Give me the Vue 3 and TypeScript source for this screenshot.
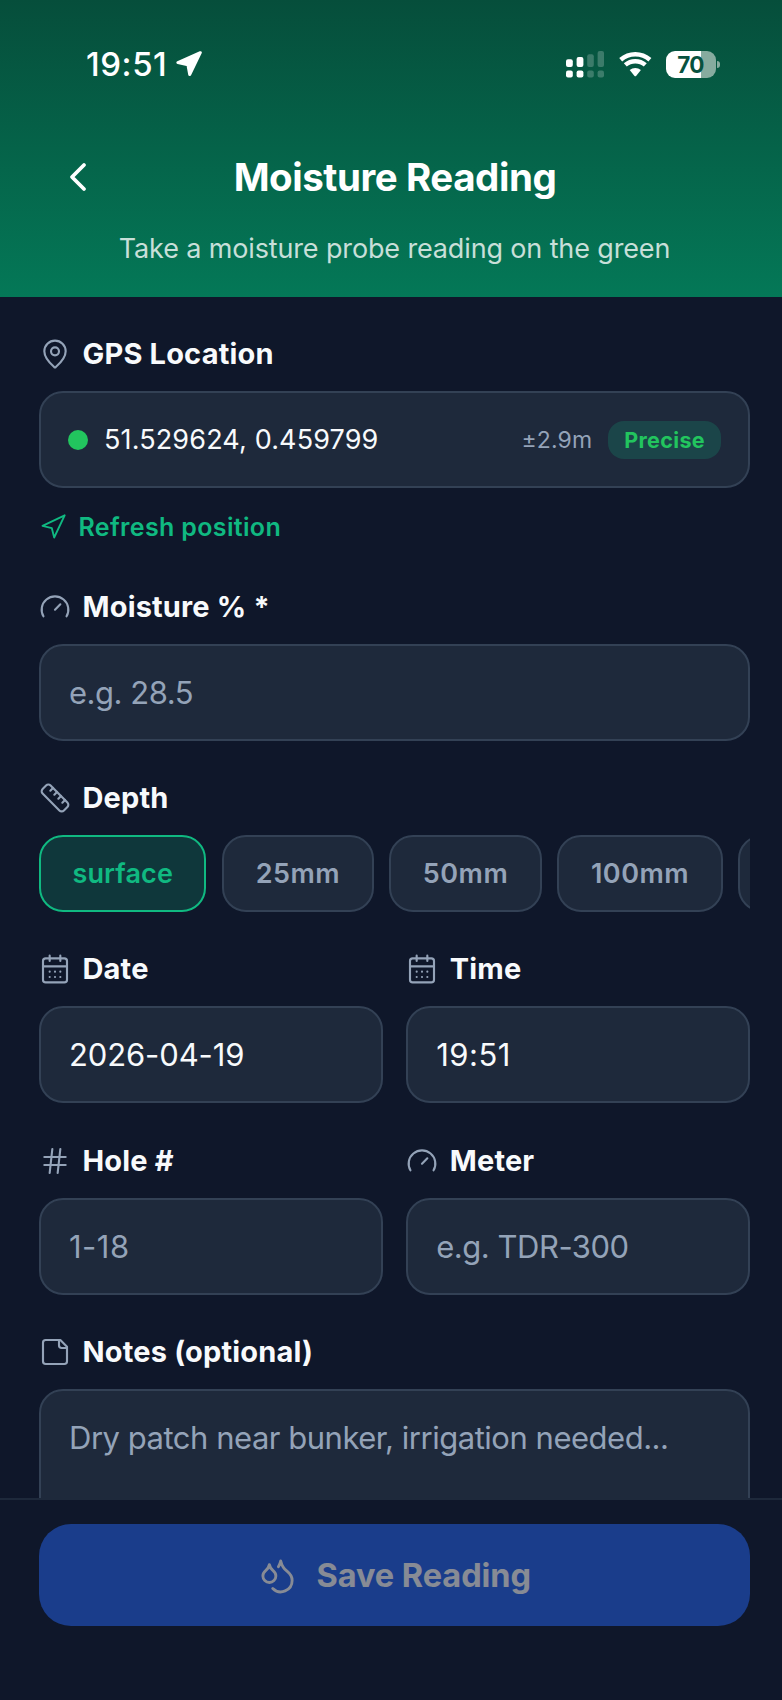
<script setup lang="ts">
import { ref } from 'vue'

type IconName = 'pin' | 'navigation' | 'gauge' | 'ruler' | 'calendar' | 'hash' | 'note' | 'droplets' | 'back'

const icons: Record<IconName, string[]> = {
  pin: [
    'M20 10c0 4.993-5.539 10.193-7.399 11.799a1 1 0 0 1-1.202 0C9.539 20.193 4 14.993 4 10a8 8 0 0 1 16 0Z',
    'M15 10a3 3 0 1 1-6 0a3 3 0 1 1 6 0Z',
  ],
  navigation: ['M3 11 22 2 13 21 11 13Z'],
  gauge: ['m12 14 4-4', 'M3.34 19a10 10 0 1 1 17.32 0'],
  ruler: [
    'M21.3 15.3a2.4 2.4 0 0 1 0 3.4l-2.6 2.6a2.4 2.4 0 0 1-3.4 0L2.7 8.7a2.41 2.41 0 0 1 0-3.4l2.6-2.6a2.41 2.41 0 0 1 3.4 0Z',
    'm14.5 12.5 2-2',
    'm11.5 9.5 2-2',
    'm8.5 6.5 2-2',
    'm17.5 15.5 2-2',
  ],
  calendar: [
    'M8 2v4',
    'M16 2v4',
    'M5 4h14a2 2 0 0 1 2 2v14a2 2 0 0 1-2 2H5a2 2 0 0 1-2-2V6a2 2 0 0 1 2-2Z',
    'M3 10h18',
    'M8 14h.01',
    'M12 14h.01',
    'M16 14h.01',
    'M8 18h.01',
    'M12 18h.01',
    'M16 18h.01',
  ],
  hash: ['M4 9h16', 'M4 15h16', 'M10 3 8 21', 'M16 3l-2 18'],
  note: ['M16 3H5a2 2 0 0 0-2 2v14a2 2 0 0 0 2 2h14a2 2 0 0 0 2-2V8Z', 'M15 3v4a2 2 0 0 0 2 2h4'],
  droplets: [
    'M7 16.3c2.2 0 4-1.83 4-4.05 0-1.16-.57-2.26-1.71-3.19S7.29 6.75 7 5.3c-.29 1.45-1.14 2.84-2.29 3.76S3 11.1 3 12.25c0 2.22 1.8 4.05 4 4.05z',
    'M12.56 6.6A10.97 10.97 0 0 0 14 3.02c.5 2.5 2 4.9 4 6.5s3 3.5 3 5.5a6.98 6.98 0 0 1-11.91 4.97',
  ],
  back: ['m15 18-6-6 6-6'],
}

const depths = ['surface', '25mm', '50mm', '100mm']
const depth = ref('surface')
const moisture = ref('')
const date = ref('2026-04-19')
const time = ref('19:51')
const hole = ref('')
const meter = ref('')
const notes = ref('')
</script>

<template>
  <div class="screen">
    <header class="top">
      <div class="status">
        <span class="clock">19:51</span>
        <svg class="arrow" viewBox="0 0 26 26">
          <path d="M24.3 1.7 1.9 11.6 11.9 13.8 13.7 23.6Z" />
        </svg>
        <svg class="signal" viewBox="0 0 38 27">
          <rect x="0" y="8.3" width="6.8" height="7.6" rx="2" />
          <rect x="10.6" y="6" width="6.8" height="9.9" rx="2" />
          <rect class="dim" x="21.2" y="3.2" width="6.6" height="12.7" rx="2" />
          <rect class="dim" x="31.6" y="0" width="6.4" height="15.9" rx="2" />
          <rect x="0" y="19.4" width="6.8" height="7.2" rx="2" />
          <rect x="10.6" y="19.4" width="6.8" height="7.2" rx="2" />
          <rect class="dim" x="21.2" y="19.4" width="6.6" height="7.2" rx="2" />
          <rect class="dim" x="31.6" y="19.4" width="6.4" height="7.2" rx="2" />
        </svg>
        <svg class="wifi" viewBox="0 0 33 25">
          <path class="ring" d="M1.7 7.7A22.2 22.2 0 0 1 30.9 7.7" />
          <path class="ring" d="M6.3 12.9A15.2 15.2 0 0 1 26.3 12.9" />
          <path d="M10.7 17.9A8.8 8.8 0 0 1 21.9 17.9L17.3 23.8Q16.3 24.8 15.3 23.8Z" />
        </svg>
        <div class="battery"><span>70</span></div>
        <i class="nub"></i>
      </div>
      <div class="titlebar">
        <button class="back" aria-label="Back">
          <svg class="icon" viewBox="0 0 24 24"><path v-for="d in icons.back" :key="d" :d="d" /></svg>
        </button>
        <h1>Moisture Reading</h1>
      </div>
      <p class="subtitle">Take a moisture probe reading on the green</p>
    </header>

    <main class="form">
      <section class="field">
        <h2 class="label">
          <svg class="icon" viewBox="0 0 24 24"><path v-for="d in icons.pin" :key="d" :d="d" /></svg>
          GPS Location
        </h2>
        <div class="box gps">
          <i class="dot"></i>
          <span class="coords">51.529624, 0.459799</span>
          <span class="accuracy">±2.9m</span>
          <span class="badge">Precise</span>
        </div>
        <button class="refresh">
          <svg class="icon" viewBox="0 0 24 24"><path v-for="d in icons.navigation" :key="d" :d="d" /></svg>
          Refresh position
        </button>
      </section>

      <section class="field">
        <h2 class="label">
          <svg class="icon" viewBox="0 0 24 24"><path v-for="d in icons.gauge" :key="d" :d="d" /></svg>
          Moisture % *
        </h2>
        <input v-model="moisture" class="box" placeholder="e.g. 28.5" />
      </section>

      <section class="field">
        <h2 class="label">
          <svg class="icon" viewBox="0 0 24 24"><path v-for="d in icons.ruler" :key="d" :d="d" /></svg>
          Depth
        </h2>
        <div class="chips">
          <button
            v-for="d in depths"
            :key="d"
            class="chip"
            :class="{ active: d === depth }"
            @click="depth = d"
          >{{ d }}</button>
          <span class="chip rest" aria-hidden="true"></span>
        </div>
      </section>

      <div class="pair">
        <section class="field">
          <h2 class="label">
            <svg class="icon" viewBox="0 0 24 24"><path v-for="d in icons.calendar" :key="d" :d="d" /></svg>
            Date
          </h2>
          <input v-model="date" class="box date" />
        </section>
        <section class="field">
          <h2 class="label">
            <svg class="icon" viewBox="0 0 24 24"><path v-for="d in icons.calendar" :key="d" :d="d" /></svg>
            Time
          </h2>
          <input v-model="time" class="box digits" />
        </section>
      </div>

      <div class="pair">
        <section class="field">
          <h2 class="label">
            <svg class="icon" viewBox="0 0 24 24"><path v-for="d in icons.hash" :key="d" :d="d" /></svg>
            Hole #
          </h2>
          <input v-model="hole" class="box digits" placeholder="1-18" />
        </section>
        <section class="field">
          <h2 class="label">
            <svg class="icon" viewBox="0 0 24 24"><path v-for="d in icons.gauge" :key="d" :d="d" /></svg>
            Meter
          </h2>
          <input v-model="meter" class="box" placeholder="e.g. TDR-300" />
        </section>
      </div>

      <section class="field">
        <h2 class="label">
          <svg class="icon" viewBox="0 0 24 24"><path v-for="d in icons.note" :key="d" :d="d" /></svg>
          Notes (optional)
        </h2>
        <textarea v-model="notes" class="box notes" placeholder="Dry patch near bunker, irrigation needed..."></textarea>
      </section>
    </main>

    <footer class="bottom">
      <button class="save">
        <svg class="icon" viewBox="0 0 24 24"><path v-for="d in icons.droplets" :key="d" :d="d" /></svg>
        Save Reading
      </button>
    </footer>
  </div>
</template>

<style>
html,
body {
  background: #0f172a;
}
</style>

<style scoped>
.screen {
  width: 782px;
  height: 1700px;
  display: flex;
  flex-direction: column;
  overflow: hidden;
  background: #0f172a;
  color: #f8fafc;
  font-family: Inter, "Liberation Sans", sans-serif;
}
.screen *,
.screen *::before {
  box-sizing: border-box;
}
button,
input,
textarea {
  font-family: inherit;
  color: inherit;
  margin: 0;
  outline: none;
  appearance: none;
}
h1,
h2,
p {
  margin: 0;
}
.icon {
  display: block;
  flex: none;
  fill: none;
  stroke: currentColor;
  stroke-width: 1.6;
  stroke-linecap: round;
  stroke-linejoin: round;
}

/* header */
.top {
  flex: none;
  height: 297px;
  background: linear-gradient(180deg, #064e3b, #047857);
}
.status {
  height: 128px;
  padding: 0 62.5px 0 86px;
  display: flex;
  align-items: center;
  color: #fff;
}
.clock {
  width: 90px;
  font-size: 33px;
  font-weight: 550;
  letter-spacing: 0.55px;
}
.arrow {
  width: 26px;
  height: 26px;
  margin-right: auto;
  fill: #fff;
  stroke: #fff;
  stroke-width: 3;
  stroke-linejoin: round;
}
.signal {
  width: 38px;
  height: 27px;
  margin-right: 15px;
  fill: #fff;
}
.signal .dim {
  fill: rgba(255, 255, 255, 0.22);
}
.wifi {
  width: 33px;
  height: 25px;
  margin-right: 14px;
  fill: #fff;
  overflow: visible;
}
.wifi .ring {
  fill: none;
  stroke: #fff;
  stroke-width: 4.5;
}
.battery {
  width: 50px;
  height: 27px;
  padding-right: 1px;
  border-radius: 9px;
  background: linear-gradient(90deg, #fff 35px, #86ab9f 35px);
  color: #07523f;
  font-size: 22.5px;
  font-weight: 700;
  letter-spacing: -0.8px;
  line-height: 27px;
  text-align: center;
}
.nub {
  width: 2.5px;
  height: 7px;
  margin-left: 1px;
  border-radius: 0 3px 3px 0;
  background: #86ab9f;
}
.titlebar {
  height: 98px;
  padding: 0 31px 0 54px;
  display: grid;
  grid-template-columns: 48px 1fr 63px;
  align-items: center;
}
.back {
  padding: 0;
  border: 0;
  background: none;
  color: #fff;
}
.back .icon {
  width: 48px;
  height: 48px;
  stroke-width: 1.9;
}
h1 {
  font-size: 38.5px;
  font-weight: 700;
  letter-spacing: -0.45px;
  line-height: 48px;
  text-align: center;
  color: #fff;
}
.subtitle {
  margin-top: 3px;
  padding: 0 32px 0 39px;
  font-size: 27px;
  line-height: 40px;
  letter-spacing: -0.14px;
  text-align: center;
  color: rgba(255, 255, 255, 0.78);
}

/* form */
.form {
  flex: 1;
  min-height: 0;
  overflow: hidden;
  padding: 39px 32px 0 39px;
  display: flex;
  flex-direction: column;
  gap: 39.2px;
}
.field {
  flex: none;
  display: flex;
  flex-direction: column;
}
.label {
  height: 36px;
  margin-bottom: 19px;
  display: flex;
  align-items: center;
  gap: 11.5px;
  font-size: 29px;
  font-weight: 700;
  letter-spacing: 0.17px;
  line-height: 36px;
  white-space: nowrap;
}
.label .icon {
  width: 32px;
  height: 32px;
  color: #94a3b8;
}
.box {
  width: 100%;
  height: 97px;
  padding: 0 28px;
  border: 2px solid #334155;
  border-radius: 24px;
  background: #1e293b;
  font-size: 31px;
  letter-spacing: -0.48px;
}
.box::placeholder {
  color: #94a3b8;
  opacity: 1;
}
.box.date {
  letter-spacing: -0.12px;
}
.box.digits {
  letter-spacing: 0.5px;
}
.notes {
  display: block;
  height: 190px;
  padding-top: 28px;
  line-height: 38px;
  resize: none;
}
.gps {
  padding-left: 27px;
  display: flex;
  align-items: center;
}
.dot {
  width: 20px;
  height: 20px;
  margin-right: 16px;
  border-radius: 50%;
  background: #22c55e;
}
.coords {
  margin-right: auto;
  font-size: 27px;
  letter-spacing: 0.14px;
}
.accuracy {
  margin-right: 16px;
  font-size: 23px;
  letter-spacing: 0.13px;
  color: #94a3b8;
}
.badge {
  height: 38px;
  padding: 0 16px;
  border-radius: 16px;
  background: rgba(16, 185, 129, 0.2);
  font-size: 21.5px;
  font-weight: 700;
  letter-spacing: 0.35px;
  line-height: 38px;
  color: #22c55e;
}
.gps .badge {
  margin-right: -1px;
}
.refresh {
  height: 44.8px;
  margin-top: 17px;
  padding: 0;
  display: flex;
  align-items: center;
  gap: 11.5px;
  border: 0;
  background: none;
  font-size: 25px;
  font-weight: 600;
  letter-spacing: 0.35px;
  color: #10b981;
}
.refresh .icon {
  width: 28px;
  height: 28px;
}
.chips {
  display: flex;
  gap: 15.7px;
  overflow: hidden;
}
.chip {
  flex: none;
  height: 77px;
  padding: 0 31.5px;
  border: 2px solid #334155;
  border-radius: 24px;
  background: #1e293b;
  font-size: 27px;
  font-weight: 600;
  letter-spacing: 0.5px;
  color: #94a3b8;
}
.chip.active {
  border-color: #10b981;
  background: rgba(16, 185, 129, 0.2);
  letter-spacing: 0.1px;
  color: #10b981;
}
.chip.rest {
  width: 150px;
}
.pair {
  flex: none;
  display: grid;
  grid-template-columns: 1fr 1fr;
  gap: 23.5px;
}

/* footer */
.bottom {
  flex: none;
  height: 202px;
  padding: 23.5px 32px 0 39px;
  border-top: 2px solid #1e293b;
  background: #0f172a;
}
.save {
  width: 100%;
  height: 102.5px;
  padding: 1px 0 0;
  display: flex;
  align-items: center;
  justify-content: center;
  gap: 19.5px;
  border: 0;
  border-radius: 32px;
  background: #2563eb;
  color: #fff;
  font-size: 32.5px;
  font-weight: 700;
  letter-spacing: -0.05px;
  opacity: 0.5;
}
.save .icon {
  width: 39px;
  height: 39px;
  stroke-width: 1.75;
}
</style>
